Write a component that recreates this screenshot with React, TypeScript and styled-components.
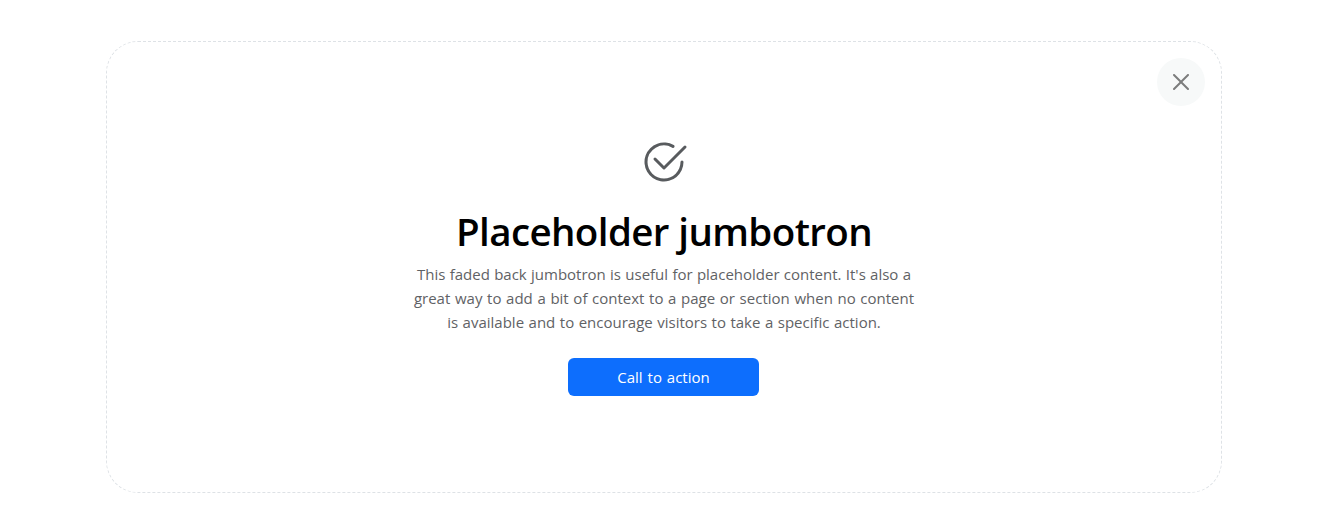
import React from "react";
import styled, { createGlobalStyle } from "styled-components";

const GlobalStyle = createGlobalStyle`
  *, *::before, *::after { box-sizing: border-box; }
  body {
    margin: 0;
    background: #fff;
    color: #212529;
    font-family: "Segoe UI", "Open Sans", "Noto Sans", sans-serif;
    font-size: 16px;
    line-height: 24px;
  }
`;

const Page = styled.main`
  padding: 41px 110px 28px 106px;
`;

const Jumbotron = styled.section`
  position: relative;
  display: flex;
  flex-direction: column;
  align-items: center;
  height: 452px;
  padding-top: 96px;
  border: 1px dashed #dee2e6;
  border-radius: 32px;
  text-align: center;
`;

const CloseButton = styled.button`
  position: absolute;
  top: 16px;
  right: 16px;
  display: flex;
  align-items: center;
  justify-content: center;
  width: 48px;
  height: 48px;
  padding: 0;
  border: 0;
  border-radius: 50%;
  background: #f7f9f9;
  color: #7c7d7d;
`;

const CheckIcon = styled.svg`
  display: block;
  margin-bottom: 21px;
  color: #585b5e;
`;

const Title = styled.h1`
  margin: 0 0 7px;
  color: #000;
  font-size: 38.5px;
  font-weight: 600;
  line-height: 48px;
  letter-spacing: -0.6px;
  white-space: nowrap;
`;

const Description = styled.p`
  margin: 0 0 24px;
  color: #5f6265;
  font-size: 15px;
  white-space: nowrap;
`;

const DescriptionLine = styled.span<{ $wordGap: number }>`
  display: block;
  word-spacing: ${({ $wordGap }) => $wordGap}px;
`;

const ActionButton = styled.button`
  width: 191px;
  height: 38px;
  margin-right: 1px;
  padding: 0;
  border: 0;
  border-radius: 6px;
  background: #0d6efd;
  color: #fff;
  font: inherit;
  font-size: 15px;
  word-spacing: 1px;
`;

export default function App() {
  return (
    <Page>
      <GlobalStyle />
      <Jumbotron>
        <CloseButton type="button" aria-label="Close">
          <svg width="16" height="16" viewBox="0 0 16 16" fill="currentColor">
            <path d="M.293.293a1 1 0 0 1 1.414 0L8 6.586 14.293.293a1 1 0 1 1 1.414 1.414L9.414 8l6.293 6.293a1 1 0 0 1-1.414 1.414L8 9.414l-6.293 6.293a1 1 0 0 1-1.414-1.414L6.586 8 .293 1.707a1 1 0 0 1 0-1.414z" />
          </svg>
        </CloseButton>
        <CheckIcon width="48" height="48" viewBox="0 0 16 16" fill="currentColor">
          <path d="M2.5 8a5.5 5.5 0 0 1 8.25-4.764.5.5 0 0 0 .5-.866A6.5 6.5 0 1 0 14.5 8a.5.5 0 0 0-1 0 5.5 5.5 0 1 1-11 0z" />
          <path d="M15.354 3.354a.5.5 0 0 0-.708-.708L8 9.293 5.354 6.646a.5.5 0 1 0-.708.708l3 3a.5.5 0 0 0 .708 0l7-7z" />
        </CheckIcon>
        <Title>Placeholder jumbotron</Title>
        <Description>
          <DescriptionLine $wordGap={0.4}>
            This faded back jumbotron is useful for placeholder content. It's also a
          </DescriptionLine>
          <DescriptionLine $wordGap={0.75}>
            great way to add a bit of context to a page or section when no content
          </DescriptionLine>
          <DescriptionLine $wordGap={0.6}>
            is available and to encourage visitors to take a specific action.
          </DescriptionLine>
        </Description>
        <ActionButton type="button">Call to action</ActionButton>
      </Jumbotron>
    </Page>
  );
}
